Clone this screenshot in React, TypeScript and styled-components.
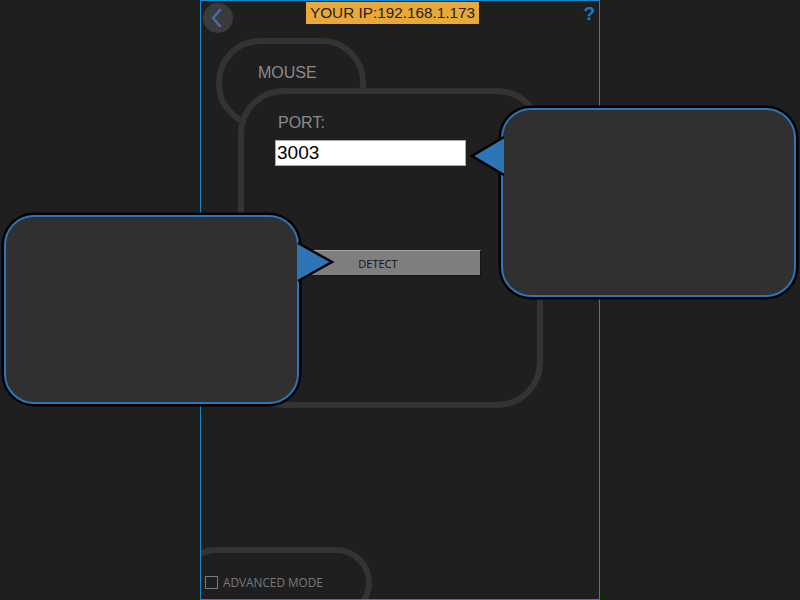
import styled, { createGlobalStyle } from "styled-components"

// Global
const GlobalStyle = createGlobalStyle`
  html, body {
    margin: 0;
    padding: 0;
    background: #1f1f1f;
  }
  * {
    box-sizing: border-box;
  }
`

// Style components
const Screen = styled.div`
  position: relative;
  width: 800px;
  height: 600px;
  display: flex;
  justify-content: center;
  background: #1f1f1f;
  overflow: hidden;
`
const Panel = styled.div`
  width: 400px;
  height: 600px;
  border: 1px solid #168ad0;
  background: #1f1f1f;
  overflow: hidden;
`
const Header = styled.div`
  display: flex;
  align-items: flex-start;
  height: 37px;
`
const BackButton = styled.div`
  width: 30px;
  height: 30px;
  margin: 2px 0 0 2px;
  border-radius: 50%;
  background: #3b3b3d;
  display: flex;
  align-items: center;
  justify-content: center;
`
const IpLabel = styled.div`
  margin: 1px 0 0 73px;
  height: 22px;
  padding: 0 4px;
  background: #e8a93a;
  color: #222;
  font-family: "Liberation Sans", Arial, sans-serif;
  font-size: 15.3px;
  line-height: 22px;
`
const Help = styled.div`
  margin: 2px 4px 0 auto;
  color: #1b7cc0;
  font-family: "Liberation Sans", Arial, sans-serif;
  font-weight: 700;
  font-size: 19px;
  line-height: 22px;
`
const Tab = styled.div`
  margin-left: 15px;
  width: 150px;
  height: 90px;
  border: 6px solid #333;
  border-radius: 44px;
  padding: 20px 0 0 36px;
`
const Label = styled.div`
  color: #8a8a8a;
  font-family: "Liberation Sans", Arial, sans-serif;
  font-size: 16px;
  line-height: 18px;
`
const PortCard = styled.div`
  position: relative;
  z-index: 1;
  margin: -40px 0 0 37px;
  width: 305px;
  height: 320px;
  border: 6px solid #333;
  border-radius: 46px;
  background: #1f1f1f;
  padding: 20px 0 0 34px;
`
const PortInput = styled.input`
  display: block;
  margin: 8px 0 0 -3px;
  width: 191px;
  height: 26px;
  border: 1px solid #a8a8a8;
  background: #fff;
  color: #000;
  padding: 0 0 0 1px;
  font-family: "Liberation Sans", Arial, sans-serif;
  font-size: 19px;
  outline: none;
`
const DetectButton = styled.button`
  display: block;
  margin: 84px 0 0 -3px;
  width: 206px;
  height: 26px;
  background: #7f7f7f;
  border: 1px solid #151515;
  border-top-color: #a8a8a8;
  border-left-color: #a0a0a0;
  color: #111;
  font-family: "Open Sans", "Noto Sans", sans-serif;
  font-size: 11px;
  padding: 0;
`
const BottomTab = styled.div`
  margin: 139px 0 0 -21px;
  width: 192px;
  height: 72px;
  border: 6px solid #333;
  border-radius: 46px;
  padding: 23px 0 0 19px;
`
const CheckRow = styled.label`
  display: flex;
  align-items: center;
  gap: 5px;
  color: #7a7a7a;
  font-family: "Open Sans", "Noto Sans", sans-serif;
  font-size: 11.8px;
  line-height: 13px;
`
const CheckBox = styled.span`
  width: 13px;
  height: 13px;
  border: 1px solid #7a7a7a;
`
const Callout = styled.div<{ left: number; top: number }>`
  position: absolute;
  left: ${(p) => p.left}px;
  top: ${(p) => p.top}px;
  width: 295px;
  height: 189px;
  background: #303030;
  border: 2px solid #2e75b6;
  border-radius: 30px;
  box-shadow: 0 0 0 2.5px #000;
  z-index: 2;
`
const Pointer = styled.svg<{ left: number; top: number }>`
  position: absolute;
  left: ${(p) => p.left}px;
  top: ${(p) => p.top}px;
  z-index: 3;
`

const App = () => {
  return (
    <>
      <GlobalStyle />
      <Screen>
        <Panel>
          <Header>
            <BackButton>
              <svg width="30" height="30" viewBox="0 0 30 30">
                <path
                  d="M17 7 L10 15 L17 23"
                  fill="none"
                  stroke="#4b6a9e"
                  strokeWidth="2.6"
                  strokeLinecap="round"
                  strokeLinejoin="round"
                />
              </svg>
            </BackButton>
            <IpLabel>YOUR IP:192.168.1.173</IpLabel>
            <Help>?</Help>
          </Header>
          <Tab>
            <Label>MOUSE</Label>
          </Tab>
          <PortCard>
            <Label>PORT:</Label>
            <PortInput defaultValue="3003" />
            <DetectButton>DETECT</DetectButton>
          </PortCard>
          <BottomTab>
            <CheckRow>
              <CheckBox />
              ADVANCED MODE
            </CheckRow>
          </BottomTab>
        </Panel>

        {/* Left callout */}
        <Callout left={4} top={215} />
        <Pointer left={296} top={238} width="40" height="50">
          <path
            d="M2 5 L36 24 L2 43"
            fill="#2e75b6"
            stroke="#000"
            strokeWidth="2.5"
          />
        </Pointer>

        {/* Right callout */}
        <Callout left={501} top={108} />
        <Pointer left={466} top={132} width="40" height="50">
          <path
            d="M38 5 L6 24 L38 43"
            fill="#2e75b6"
            stroke="#000"
            strokeWidth="2.5"
          />
        </Pointer>
      </Screen>
    </>
  )
}

export default App
